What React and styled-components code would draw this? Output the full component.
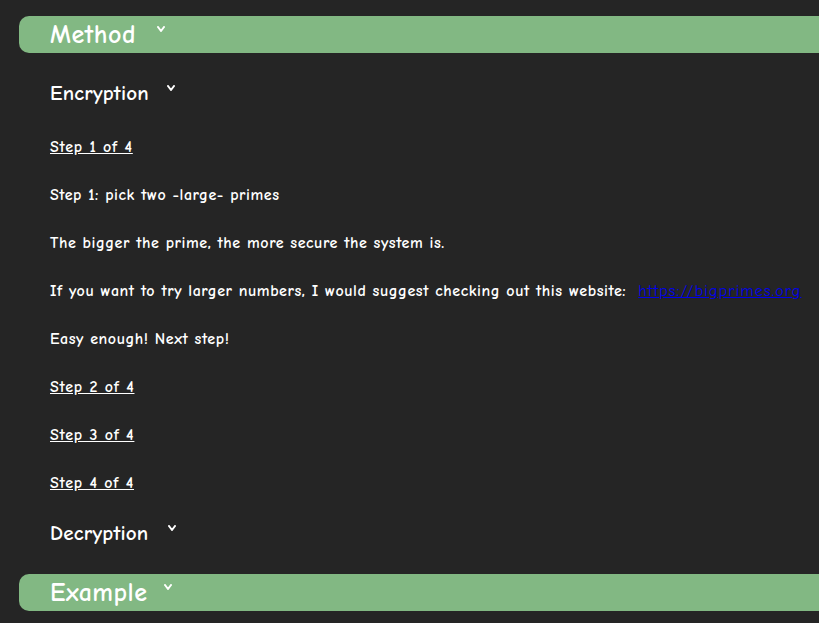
import styled, { createGlobalStyle } from 'styled-components';

const GlobalStyle = createGlobalStyle`
  html, body {
    margin: 0;
    padding: 0;
    background: #252525;
    overflow: hidden;
  }
  body {
    font-family: "Comic Sans MS", "Comic Neue", "Open Sans", sans-serif;
    color: #ffffff;
  }
`;

const Page = styled.div`
  padding: 16px 0 0 19px;
  width: 840px;
`;

const SectionBar = styled.div`
  display: flex;
  align-items: center;
  height: 37px;
  padding-left: 31px;
  border-radius: 10px 0 0 10px;
  background: #82b883;
  font-size: 26px;
  letter-spacing: 0.5px;
  font-weight: bold;
  margin-top: ${p => p.$top || 0}px;
`;

const SubHead = styled.div`
  display: flex;
  align-items: center;
  height: 40px;
  padding-left: 31px;
  font-size: 21px;
  letter-spacing: 0.2px;
  font-weight: bold;
  margin-top: ${p => p.$top || 0}px;
`;

const Steps = styled.div`
  display: flex;
  flex-direction: column;
  padding-left: 31px;
  margin-top: 10px;
`;

const Line = styled.div`
  height: 48px;
  line-height: 48px;
  font-size: 16px;
  letter-spacing: ${p => (p.$link ? '0.8px' : '0.55px')};
  font-weight: bold;
  white-space: nowrap;
  text-decoration: ${p => (p.$link ? 'underline' : 'none')};
`;

const Link = styled.a`
  color: #0000ee;
  font-weight: normal;
  font-size: 16px;
  letter-spacing: 1.1px;
  margin-left: 12px;
`;

const Chev = styled.svg`
  width: 8px;
  height: 6px;
  margin-left: ${p => p.$gap}px;
  align-self: flex-start;
  margin-top: ${p => p.$top}px;
  fill: none;
  stroke: #ffffff;
  stroke-width: 2;
  stroke-linecap: round;
  stroke-linejoin: round;
`;

function Chevron({ gap, top }) {
  return (
    <Chev $gap={gap} $top={top} viewBox="0 0 8 6">
      <polyline points="1,1 4,5 7,1" />
    </Chev>
  );
}

export default function App() {
  return (
    <Page>
      <GlobalStyle />
      <SectionBar>
        Method
        <Chevron gap={21} top={10} />
      </SectionBar>
      <SubHead $top={20}>
        Encryption
        <Chevron gap={18} top={12} />
      </SubHead>
      <Steps>
        <Line $link>Step 1 of 4</Line>
        <Line>Step 1: pick two -large- primes</Line>
        <Line>The bigger the prime, the more secure the system is.</Line>
        <Line>
          If you want to try larger numbers, I would suggest checking out this website:
          <Link href="#">https://bigprimes.org</Link>
        </Line>
        <Line>Easy enough! Next step!</Line>
        <Line $link>Step 2 of 4</Line>
        <Line $link>Step 3 of 4</Line>
        <Line $link>Step 4 of 4</Line>
      </Steps>
      <SubHead $top={6}>
        Decryption
        <Chevron gap={20} top={12} />
      </SubHead>
      <SectionBar $top={21}>
        Example
        <Chevron gap={16} top={10} />
      </SectionBar>
    </Page>
  );
}
